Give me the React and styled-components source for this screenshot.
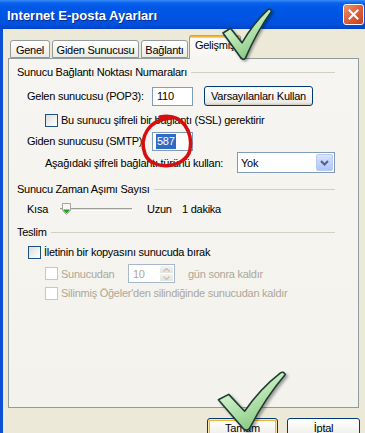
import React from "react";
import styled, { createGlobalStyle } from "styled-components";

const Global = createGlobalStyle`
  html, body { margin: 0; padding: 0; background: #ece9d8; }
  body {
    font-family: "Liberation Sans", Arial, sans-serif;
    font-size: 11px;
    letter-spacing: -0.25px;
    color: #000;
  }
  * { box-sizing: border-box; }
`;

const Window = styled.div`
  position: relative;
  width: 365px;
  height: 433px;
  overflow: hidden;
  background: #ece9d8;
  display: flex;
  flex-direction: column;
`;

const TitleBar = styled.div`
  flex: none;
  height: 29px;
  display: flex;
  align-items: center;
  justify-content: space-between;
  padding: 0 1px 0 7px;
  background: linear-gradient(
    to bottom,
    #3b8cf8 0%,
    #0a63ee 10%,
    #0058e6 25%,
    #0054e3 60%,
    #0050dc 85%,
    #0042c8 100%
  );
`;

const Title = styled.div`
  color: #fff;
  font-weight: bold;
  font-size: 13px;
  letter-spacing: 0;
  text-shadow: 1px 1px 0 #0b2a8a;
  margin-top: 1px;
`;

const CloseButton = styled.div`
  width: 21px;
  height: 21px;
  border: 1px solid #fff;
  border-radius: 3px;
  background: linear-gradient(135deg, #f09a7a 0%, #e2623c 45%, #c8411b 100%);
  display: flex;
  align-items: center;
  justify-content: center;
  box-shadow: inset 0 0 1px #b03010;
`;

const Frame = styled.div`
  flex: 1;
  display: flex;
  flex-direction: column;
  border-left: 3px solid #0a4fd6;
  padding: 6px 0 0 5px;
`;

const TabsRow = styled.div`
  position: relative;
  z-index: 2;
  display: flex;
  align-items: flex-end;
  height: 23px;
  padding-left: 2px;
  gap: 2px;
`;

const Tab = styled.div`
  width: ${(p) => p.$w}px;
  height: ${(p) => (p.$active ? 24 : 18)}px;
  margin: ${(p) => (p.$active ? "0 -1px -1px -1px" : "0")};
  border: 1px solid #919b9c;
  border-bottom: ${(p) => (p.$active ? "none" : "1px solid #919b9c")};
  border-top: ${(p) => (p.$active ? "none" : "1px solid #919b9c")};
  border-radius: 3px 3px 0 0;
  background: ${(p) =>
    p.$active
      ? "linear-gradient(to bottom, #e68b2c 0, #ffc83c 2px, #ffd767 3px, #fcfcfe 3px, #f6f5f1 100%)"
      : "linear-gradient(to bottom, #ffffff 0%, #f6f5f1 50%, #ebeae3 100%)"};
  display: flex;
  align-items: center;
  justify-content: center;
  padding-top: ${(p) => (p.$active ? 0 : 1)}px;
  padding-bottom: ${(p) => (p.$active ? 4 : 0)}px;
  white-space: nowrap;
`;

const Panel = styled.div`
  position: relative;
  z-index: 1;
  width: 351px;
  height: 350px;
  border: 1px solid #919b9c;
  background: linear-gradient(to bottom, #f6f5f1 0%, #f3f2ed 100%);
  padding: 6px 23px 0 8px;
  display: flex;
  flex-direction: column;
`;

const GroupHeader = styled.div`
  display: flex;
  align-items: center;
  height: 14px;
  margin-top: ${(p) => p.$mt || 0}px;
  gap: 4px;
  white-space: nowrap;
  &::after {
    content: "";
    flex: 1;
    height: 1px;
    background: #d0d0bf;
  }
`;

const Row = styled.div`
  display: flex;
  align-items: center;
  height: ${(p) => p.$h || 14}px;
  margin-top: ${(p) => p.$mt || 0}px;
  padding-left: ${(p) => p.$indent || 0}px;
  white-space: nowrap;
`;

const Label = styled.span`
  flex: none;
  width: ${(p) => (p.$w ? `${p.$w}px` : "auto")};
  margin-left: ${(p) => p.$ml || 0}px;
  color: ${(p) => (p.$disabled ? "#aca899" : "#000")};
`;

const TextBox = styled.div`
  flex: none;
  width: ${(p) => p.$w}px;
  height: 19px;
  border: 1px solid #7f9db9;
  background: #fff;
  display: flex;
  align-items: center;
  padding-left: ${(p) => p.$pl || 4}px;
`;

const Selected = styled.span`
  background: #316ac5;
  color: #fff;
  padding: 1px 1px;
  line-height: 13px;
`;

const XPButton = styled.div`
  flex: none;
  width: ${(p) => p.$w}px;
  height: ${(p) => p.$h || 23}px;
  margin-left: ${(p) => p.$ml || 0}px;
  border: 1px solid #003c74;
  border-radius: 3px;
  background: linear-gradient(to bottom, #ffffff 0%, #f7f7f4 40%, #ecebe6 85%, #d6d0c5 100%);
  display: flex;
  align-items: ${(p) => (p.$top ? "flex-start" : "center")};
  padding-top: ${(p) => (p.$top ? 3 : 0)}px;
  justify-content: center;
  box-shadow: ${(p) =>
    p.$default ? "inset 0 0 0 1px #ffe7a2, inset 0 0 0 2px #f8b330" : "inset 0 -1px 0 #d6d0c5"};
`;

const Checkbox = styled.span`
  flex: none;
  width: 13px;
  height: 13px;
  border: 1px solid ${(p) => (p.$disabled ? "#cac8bb" : "#1c5180")};
  background: ${(p) =>
    p.$disabled ? "#ffffff" : "linear-gradient(135deg, #dcdcd7 0%, #f2f2ee 60%, #ffffff 100%)"};
  margin-right: 3px;
`;

const Combo = styled.div`
  flex: none;
  width: 98px;
  height: 21px;
  border: 1px solid #7f9db9;
  background: #fff;
  display: flex;
  align-items: center;
  justify-content: space-between;
  padding: 0 1px 0 3px;
`;

const ComboArrow = styled.div`
  width: 17px;
  height: 17px;
  border: 1px solid #b9cbf3;
  border-radius: 2px;
  background: linear-gradient(to bottom, #d9e3fd 0%, #c3d3fb 50%, #b1c6f6 100%);
  display: flex;
  align-items: center;
  justify-content: center;
`;

const SliderTrack = styled.div`
  position: relative;
  flex: none;
  width: 72px;
  height: 3px;
  border-top: 1px solid #9d9c99;
  border-bottom: 1px solid #fff;
  background: #e3e2dc;
`;

const SliderThumb = styled.svg`
  position: absolute;
  left: 2px;
  top: -6px;
`;

const SpinBox = styled.div`
  flex: none;
  width: 47px;
  height: 19px;
  margin-left: ${(p) => p.$ml || 0}px;
  border: 1px solid #a8b8cc;
  background: #fff;
  display: flex;
  align-items: stretch;
  justify-content: space-between;
  padding: 1px 1px 1px 4px;
  color: #aca899;
`;

const SpinValue = styled.span`
  display: flex;
  align-items: center;
`;

const SpinButtons = styled.div`
  width: 13px;
  display: flex;
  flex-direction: column;
  gap: 1px;
`;

const SpinHalf = styled.div`
  flex: 1;
  border-radius: 1px;
  background: linear-gradient(to bottom, #f4f4f0, #e4e3dd);
  display: flex;
  align-items: center;
  justify-content: center;
`;

const ButtonsRow = styled.div`
  display: flex;
  justify-content: flex-end;
  gap: 9px;
  margin-top: 10px;
  padding-right: 5px;
`;

const Overlay = styled.svg`
  position: absolute;
  left: ${(p) => p.$x}px;
  top: ${(p) => p.$y}px;
  pointer-events: none;
  overflow: visible;
  z-index: 5;
`;

const CHECK_PATH =
  "M2 48 L17 39 L40 67 Q62 30 92 3 Q96 0 99 6 Q70 45 47 96 Q43 101 38 96 Z";

function Check({ x, y, w, h, id }) {
  return (
    <Overlay $x={x} $y={y} width={w} height={h} viewBox="0 0 100 100" preserveAspectRatio="none">
      <defs>
        <linearGradient id={`g${id}`} x1="0" y1="0" x2="0.6" y2="1">
          <stop offset="0" stopColor="#f0fff0" />
          <stop offset="0.45" stopColor="#c4ecbd" />
          <stop offset="1" stopColor="#84c47e" />
        </linearGradient>
        <filter id={`s${id}`} x="-20%" y="-20%" width="150%" height="150%">
          <feDropShadow dx="3" dy="3" stdDeviation="2" floodColor="#000" floodOpacity="0.35" />
        </filter>
      </defs>
      <path
        d={CHECK_PATH}
        fill={`url(#g${id})`}
        stroke="#1e3b33"
        strokeWidth="1.6"
        vectorEffect="non-scaling-stroke"
        strokeLinejoin="round"
        filter={`url(#s${id})`}
      />
    </Overlay>
  );
}

export default function App() {
  return (
    <>
      <Global />
      <Window>
        <TitleBar>
          <Title>Internet E-posta Ayarları</Title>
          <CloseButton>
            <svg width="11" height="11" viewBox="0 0 11 11">
              <path d="M1.5 1.5 L9.5 9.5 M9.5 1.5 L1.5 9.5" stroke="#fff" strokeWidth="2" strokeLinecap="square" />
            </svg>
          </CloseButton>
        </TitleBar>
        <Frame>
          <TabsRow>
            <Tab $w={40}>Genel</Tab>
            <Tab $w={87}>Giden Sunucusu</Tab>
            <Tab $w={47}>Bağlantı</Tab>
            <Tab $w={52} $active>
              Gelişmiş
            </Tab>
          </TabsRow>
          <Panel>
            <GroupHeader>Sunucu Bağlantı Noktası Numaraları</GroupHeader>
            <Row $h={20} $mt={7} $indent={10}>
              <Label $w={125}>Gelen sunucusu (POP3):</Label>
              <TextBox $w={41}>110</TextBox>
              <XPButton $w={109} $h={20} $ml={11}>
                Varsayılanları Kullan
              </XPButton>
            </Row>
            <Row $mt={7} $indent={28}>
              <Checkbox />
              <Label>Bu sunucu şifreli bir bağlantı (SSL) gerektirir</Label>
            </Row>
            <Row $h={20} $mt={4} $indent={10}>
              <Label $w={125}>Giden sunucusu (SMTP):</Label>
              <TextBox $w={41} $pl={3}>
                <Selected>587</Selected>
              </TextBox>
            </Row>
            <Row $h={21} $mt={1} $indent={28}>
              <Label $w={192}>Aşağıdaki şifreli bağlantı türünü kullan:</Label>
              <Combo>
                <span>Yok</span>
                <ComboArrow>
                  <svg width="9" height="6" viewBox="0 0 9 6">
                    <path d="M1 1 L4.5 4.5 L8 1" fill="none" stroke="#4d6185" strokeWidth="2" />
                  </svg>
                </ComboArrow>
              </Combo>
            </Row>
            <GroupHeader $mt={9}>Sunucu Zaman Aşımı Sayısı</GroupHeader>
            <Row $mt={6} $indent={10}>
              <Label $w={33}>Kısa</Label>
              <SliderTrack>
                <SliderThumb width="9" height="12" viewBox="0 0 9 12">
                  <path d="M0.5 0.5 H8.5 V7.5 L4.5 11.5 L0.5 7.5 Z" fill="#f7f7f4" stroke="#a5a59e" />
                  <path d="M1.5 6.5 H7.5 V7.5 L4.5 10.5 L1.5 7.5 Z" fill="#21a121" />
                </SliderThumb>
              </SliderTrack>
              <Label $w={35} $ml={15}>
                Uzun
              </Label>
              <Label>1 dakika</Label>
            </Row>
            <GroupHeader $mt={9}>Teslim</GroupHeader>
            <Row $mt={6} $indent={11}>
              <Checkbox />
              <Label>İletinin bir kopyasını sunucuda bırak</Label>
            </Row>
            <Row $h={19} $mt={5} $indent={28}>
              <Checkbox $disabled />
              <Label $w={67} $disabled>
                Sunucudan
              </Label>
              <SpinBox>
                <SpinValue>10</SpinValue>
                <SpinButtons>
                  <SpinHalf>
                    <svg width="7" height="4" viewBox="0 0 7 4">
                      <path d="M0.5 3.5 L3.5 0.5 L6.5 3.5" fill="none" stroke="#c2c0b4" strokeWidth="1.2" />
                    </svg>
                  </SpinHalf>
                  <SpinHalf>
                    <svg width="7" height="4" viewBox="0 0 7 4">
                      <path d="M0.5 0.5 L3.5 3.5 L6.5 0.5" fill="none" stroke="#c2c0b4" strokeWidth="1.2" />
                    </svg>
                  </SpinHalf>
                </SpinButtons>
              </SpinBox>
              <Label $ml={13} $disabled>
                gün sonra kaldır
              </Label>
            </Row>
            <Row $mt={3} $indent={28}>
              <Checkbox $disabled />
              <Label $disabled>Silinmiş Öğeler'den silindiğinde sunucudan kaldır</Label>
            </Row>
          </Panel>
          <ButtonsRow>
            <XPButton $w={71} $default $top>
              Tamam
            </XPButton>
            <XPButton $w={73} $top>
              İptal
            </XPButton>
          </ButtonsRow>
        </Frame>

        <Overlay $x={136} $y={110} width="62" height="62" viewBox="0 0 62 62">
          <path
            d="M24 7 C 48 2, 57 24, 54 40 C 50 58, 16 62, 9 44 C 3 28, 12 9, 36 8"
            fill="none"
            stroke="#d40f0f"
            strokeWidth="3.5"
            strokeLinecap="round"
          />
        </Overlay>
        <Check id="a" x={222} y={8} w={50} h={52} />
        <Check id="b" x={217} y={371} w={69} h={60} />
      </Window>
    </>
  );
}
